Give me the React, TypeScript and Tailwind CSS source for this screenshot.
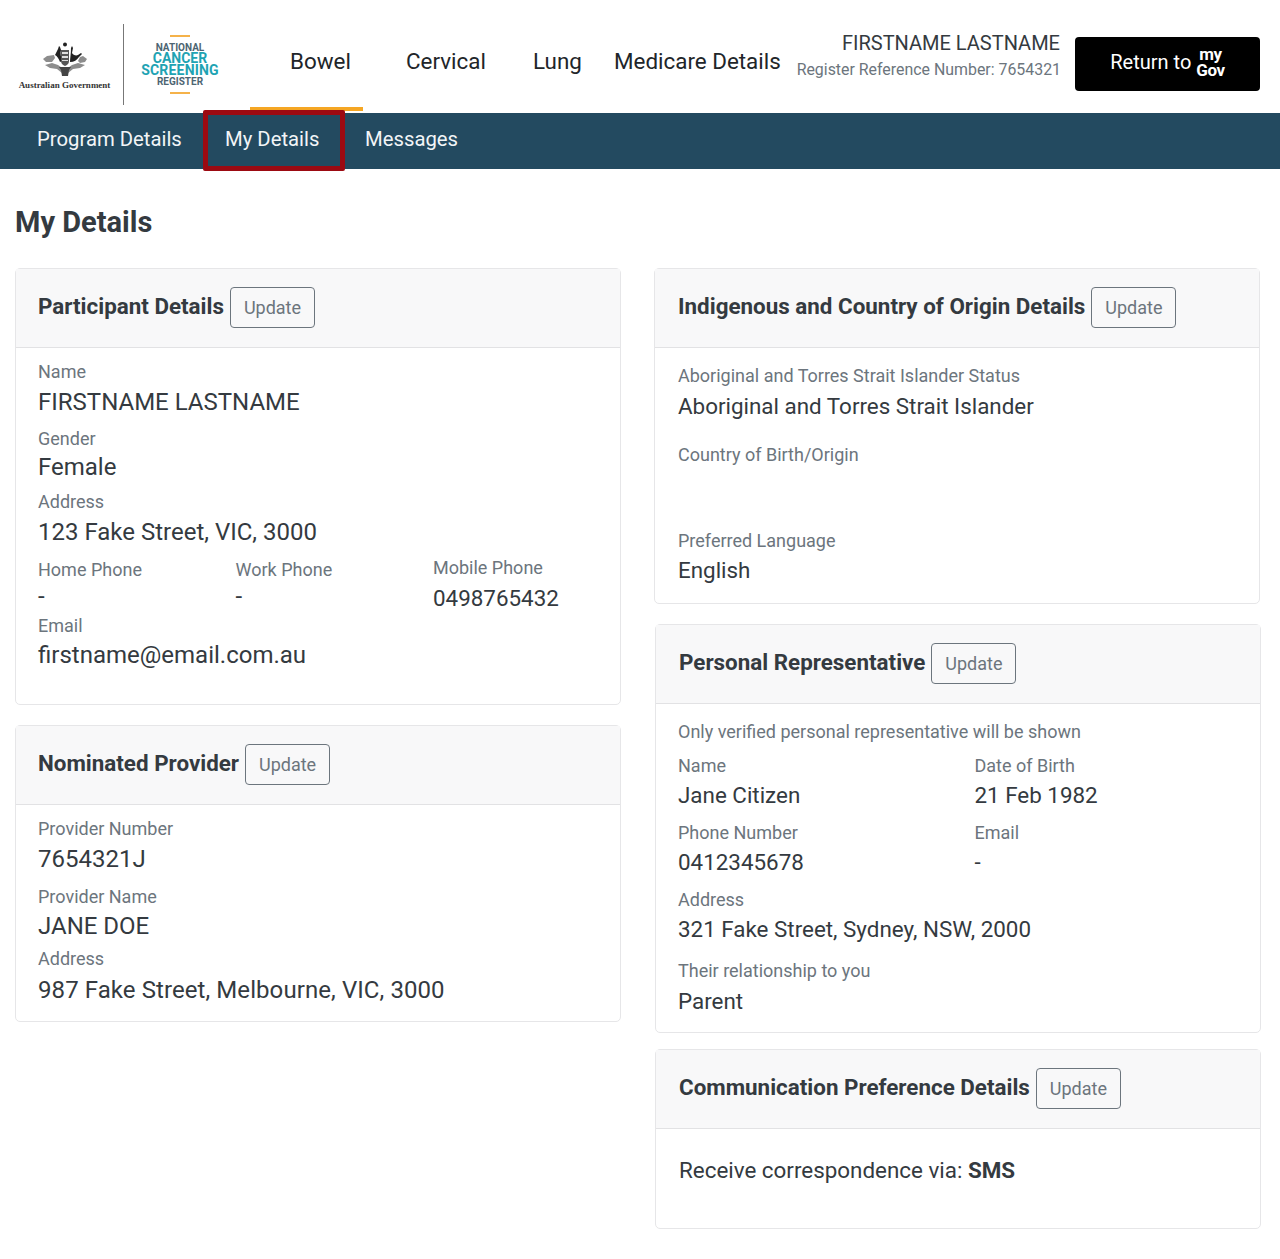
import React from "react";

function Field({
  label,
  value,
  className = "",
  valueClass = "mt-[2px] text-[24px]",
}: {
  label: string;
  value: string;
  className?: string;
  valueClass?: string;
}) {
  return (
    <div className={className}>
      <div className="text-[18px] leading-[24px] text-[#6c757d]">{label}</div>
      <div className={`leading-[32px] text-[#343a40] ${valueClass}`}>{value}</div>
    </div>
  );
}

const R = "mt-[1px] text-[22.4px]";

function Card({
  title,
  children,
  className = "",
  indent = "pl-[23px]",
}: {
  title: string;
  children: React.ReactNode;
  className?: string;
  indent?: string;
}) {
  return (
    <section className={`rounded-[5px] border border-[#e6e6e8] bg-white ${className}`}>
      <div className={`flex h-[79px] items-center gap-[6px] border-b border-[#e2e2e4] bg-[#f8f8f9] ${indent}`}>
        <h2 className="-mt-[4px] text-[22.4px] font-bold leading-[30px] text-[#343a40]">{title}</h2>
        <button className="-mt-[1px] h-[41px] w-[85px] rounded-[4px] border border-[#6c757d] text-[18px] text-[#6c757d]">Update</button>
      </div>
      {children}
    </section>
  );
}

function Crest() {
  return (
    <svg width="46" height="34" viewBox="0 0 46 34" className="block">
      {/* star */}
      <circle cx="23" cy="2.5" r="2" fill="#222" />
      {/* kangaroo */}
      <path d="M18 20c-1-3-3-6-5-7l3-6 1-3 1 1 1 3c-1 3 0 7 1 11z" fill="#222" />
      {/* emu */}
      <path d="M28 20c0-4 1-8 1-14l1-2 1 2-1 5c1 2 4 3 6 2l3-2 1 1-3 3c-2 3-5 5-9 5z" fill="#222" />
      {/* shield */}
      <path d="M19 8h8v11c0 3-2 4-4 5-2-1-4-2-4-5z" fill="#555" />
      <path d="M20 10h6v2h-6zM20 14h6v2h-6zM20 18h6v1h-6z" fill="#ddd" />
      {/* wattle foliage */}
      <g fill="#8d8d8d">
        <path d="M1 17l4-3 7-1 1 3-3 4-6 0z" />
        <path d="M45 17l-4-3-3 1-2 4 2 2 5-1z" />
        <path d="M3 23l7-2 6 2 7 5 7-5 6-2 7 2-5 3-7 1-5 4h-6l-5-4-7-1z" />
      </g>
      <path d="M17 25h12l-2 3-1 6h-6l-1-6z" fill="#444" />
    </svg>
  );
}

function Logos() {
  return (
    <div className="flex items-center">
      <div className="ml-[18px] flex w-[93px] flex-col items-center pt-[4px]">
        <Crest />
        <div className="mt-[3px] whitespace-nowrap font-['Liberation_Serif'] text-[9px] font-bold leading-[12px] text-[#333]">Australian Government</div>
      </div>
      <div className="ml-[12px] h-[81px] w-px bg-[#777]" />
      <div className="ml-[17px] flex w-[78px] flex-col items-center">
        <div className="h-[2px] w-[20px] bg-[#f5b24a]" />
        <div className="mt-[6px] text-[10px] font-bold leading-[10px] text-[#4d6572]">NATIONAL</div>
        <div className="-mt-[1px] text-[14px] font-bold leading-[12px] text-[#1fa3b3]">CANCER</div>
        <div className="text-[14px] font-bold leading-[12px] tracking-[0.2px] text-[#1fa3b3]">SCREENING</div>
        <div className="mt-[1px] text-[10px] font-bold leading-[10px] text-[#4d6572]">REGISTER</div>
        <div className="mt-[5px] h-[2px] w-[20px] bg-[#f5b24a]" />
      </div>
    </div>
  );
}

export default function App() {
  return (
    <div className="min-h-[1259px] bg-white font-['Roboto',sans-serif]">
      <header className="relative flex h-[113px] items-center pt-[16px]">
        <Logos />
        <nav className="-mt-[8px] ml-[71px] flex items-center text-[22.4px] leading-[30px] text-[#212529]">
          <a className="w-[116px]">Bowel</a>
          <a className="w-[127px]">Cervical</a>
          <a className="w-[81px]">Lung</a>
          <a className="whitespace-nowrap">Medicare Details</a>
        </nav>
        <div className="-mt-[18px] ml-auto mr-[14px] text-right">
          <div className="mr-[1px] text-[20px] leading-[28px] text-[#343a40]">FIRSTNAME LASTNAME</div>
          <div className="mt-[1px] whitespace-nowrap text-[15.9px] leading-[24px] text-[#6c757d]">Register Reference Number: 7654321</div>
        </div>
        <button className="-mt-[2px] mr-[20px] flex h-[54px] w-[185px] items-center justify-center gap-[5px] rounded-[4px] bg-black pb-[3px] text-[20px] text-white">
          Return to
          <span className="flex flex-col text-[17px] font-bold leading-[16px] tracking-tight">
            <span>my</span>
            <span>Gov</span>
          </span>
        </button>
        <div className="absolute bottom-[2px] left-[250px] h-[4px] w-[113px] bg-[#f5a623]" />
      </header>
      <nav className="relative flex h-[56px] items-center bg-[#234a60] pb-[4px] pl-[37px] text-[20.3px] text-[#f2f5f7]">
        <a className="w-[188px]">Program Details</a>
        <a className="w-[140px]">My Details</a>
        <a>Messages</a>
        <div className="absolute left-[203px] top-[-3px] h-[61px] w-[142px] rounded-[2px] border-[5px] border-[#9c0a12]" />
      </nav>
      <main className="px-[15px]">
        <h1 className="mb-[27px] mt-[34px] text-[29px] font-bold leading-[38px] text-[#343a40]">My Details</h1>
        <div className="grid grid-cols-[606px_606px] gap-x-[34px]">
          <div className="flex flex-col gap-[20px]">
            <Card title="Participant Details" indent="pl-[22px]">
              <div className="h-[356px] pl-[22px] pt-[12px]">
                <Field label="Name" value="FIRSTNAME LASTNAME" />
                <Field label="Gender" value="Female" className="mt-[9px]" valueClass="mt-0 text-[24px]" />
                <Field label="Address" value="123 Fake Street, VIC, 3000" className="mt-[7px]" valueClass="mt-[2px] text-[24px]" />
                <div className="mt-[10px] grid grid-cols-[197.5px_197.5px_1fr]">
                  <div>
                    <div className="text-[18px] leading-[24px] text-[#6c757d]">Home Phone</div>
                    <div className="text-[24px] leading-[28px] text-[#343a40]">-</div>
                  </div>
                  <div>
                    <div className="text-[18px] leading-[24px] text-[#6c757d]">Work Phone</div>
                    <div className="text-[24px] leading-[28px] text-[#343a40]">-</div>
                  </div>
                  <Field label="Mobile Phone" value="0498765432" className="-mt-[2px]" valueClass="mt-[2px] text-[22.4px]" />
                </div>
                <Field label="Email" value="firstname@email.com.au" valueClass="mt-[1px] text-[24px]" />
              </div>
            </Card>
            <Card title="Nominated Provider" indent="pl-[22px]">
              <div className="h-[216px] pl-[22px] pt-[12px]">
                <Field label="Provider Number" value="7654321J" />
                <Field label="Provider Name" value="JANE DOE" className="mt-[10px]" valueClass="mt-[1px] text-[24px]" />
                <Field label="Address" value="987 Fake Street, Melbourne, VIC, 3000" className="mt-[5px]" valueClass="mt-[3px] text-[24px] tracking-[0.08px]" />
              </div>
            </Card>
          </div>
          <div className="flex flex-col">
            <Card title="Indigenous and Country of Origin Details" className="-ml-[1px] mr-[1px]">
              <div className="h-[255px] pl-[23px] pt-[16px]">
                <Field label="Aboriginal and Torres Strait Islander Status" value="Aboriginal and Torres Strait Islander" valueClass="mt-[2px] text-[22.4px]" />
                <div className="mt-[21px] text-[18px] leading-[24px] text-[#6c757d]">Country of Birth/Origin</div>
                <Field label="Preferred Language" value="English" className="mt-[62px]" valueClass={R} />
              </div>
            </Card>
            <Card title="Personal Representative" className="mt-[20px]">
              <div className="h-[328px] pl-[22px] pt-[16px]">
                <div className="text-[18px] leading-[24px] text-[#6c757d]">Only verified personal representative will be shown</div>
                <div className="mt-[10px] grid grid-cols-[296.5px_1fr] gap-y-[10px]">
                  <Field label="Name" value="Jane Citizen" valueClass={R} />
                  <Field label="Date of Birth" value="21 Feb 1982" valueClass={R} />
                  <Field label="Phone Number" value="0412345678" valueClass={R} />
                  <Field label="Email" value="-" valueClass={R} />
                </div>
                <Field label="Address" value="321 Fake Street, Sydney, NSW, 2000" className="mt-[10px]" valueClass={R} />
                <Field label="Their relationship to you" value="Parent" className="mt-[14px]" valueClass="mt-[2px] text-[22.4px]" />
              </div>
            </Card>
            <Card title="Communication Preference Details" className="mt-[16px]">
              <div className="h-[99px] pl-[23px] pt-[25px] text-[22.4px] leading-[32px] text-[#343a40]">
                Receive correspondence via: <strong>SMS</strong>
              </div>
            </Card>
          </div>
        </div>
      </main>
    </div>
  );
}
